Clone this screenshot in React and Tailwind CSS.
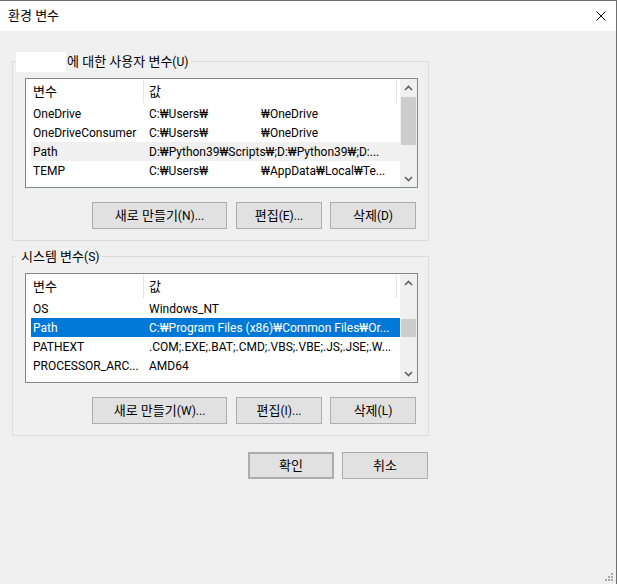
import React from "react";

const userRows = [
  { name: "OneDrive", pre: "C:₩Users₩", post: "₩OneDrive" },
  { name: "OneDriveConsumer", pre: "C:₩Users₩", post: "₩OneDrive" },
  { name: "Path", value: "D:₩Python39₩Scripts₩;D:₩Python39₩;D:..." },
  { name: "TEMP", pre: "C:₩Users₩", post: "₩AppData₩Local₩Te..." },
];

const systemRows = [
  { name: "OS", value: "Windows_NT" },
  { name: "Path", value: "C:₩Program Files (x86)₩Common Files₩Or..." },
  { name: "PATHEXT", value: ".COM;.EXE;.BAT;.CMD;.VBS;.VBE;.JS;.JSE;.W..." },
  { name: "PROCESSOR_ARC...", value: "AMD64" },
];

// hangul is a touch bigger than the latin text in the original
function K({ children }) {
  return <span className="text-[13px]">{children}</span>;
}

function Chevron({ up }) {
  return (
    <svg width="9" height="6" viewBox="0 0 9 6">
      <polyline
        points={up ? "1,5 4.5,1.5 8,5" : "1,1 4.5,4.5 8,1"}
        fill="none"
        stroke="#606060"
        strokeWidth="1.6"
      />
    </svg>
  );
}

function ListView({ rows, hoverRow, selectedRow, thumbClass }) {
  return (
    <div className="flex h-[110px] w-[393px] border border-[#828790] bg-white">
      <div className="flex-1 min-w-0 overflow-hidden">
        <div className="flex h-[25px]">
          <div className="w-[117px] pl-[7px] flex items-center"><K>변수</K></div>
          <div className="w-[254px] pl-[5px] flex items-center border-l border-r border-[#e5e5e5] my-[1px]"><K>값</K></div>
        </div>
        {rows.map((r, i) => {
          const sel = i === selectedRow;
          const hov = i === hoverRow;
          return (
            <div
              key={i}
              className={`flex h-[19px] ml-[5px] items-center whitespace-nowrap ${
                sel ? "bg-[#0078d7] text-white" : hov ? "bg-[#f0f0f0]" : ""
              }`}
            >
              <div className="w-[112px] pl-[2px] overflow-hidden">{r.name}</div>
              <div className="flex-1 pl-[6px] overflow-hidden">
                {r.value ? (
                  r.value
                ) : (
                  <>
                    <span className="inline-block w-[112px]">{r.pre}</span>
                    {r.post}
                  </>
                )}
              </div>
            </div>
          );
        })}
      </div>
      <div className="w-[17px] bg-[#f0f0f0] flex flex-col">
        <div className="h-[17px] flex items-center justify-center">
          <Chevron up />
        </div>
        <div className="flex-1">
          <div className={`mx-[1px] bg-[#cdcdcd] ${thumbClass}`} />
        </div>
        <div className="h-[17px] flex items-center justify-center">
          <Chevron />
        </div>
      </div>
    </div>
  );
}

function Btn({ children, className = "" }) {
  return (
    <button className={`h-[27px] bg-[#e1e1e1] border border-[#adadad] flex items-center justify-center ${className}`}>
      {children}
    </button>
  );
}

function Group({ legend, children }) {
  return (
    <div className="relative w-[417px] border border-[#dcdcdc] pt-[16px] pl-[12px] pb-[11px]">
      <div className="absolute top-[-10px] left-[3px] h-[20px] flex items-center bg-[#f0f0f0] pr-[3px]">
        {legend}
      </div>
      {children}
    </div>
  );
}

export default function App() {
  return (
    <div className="relative w-[618px] h-[584px] bg-white text-[12px] text-black font-['Roboto','Noto_Sans_CJK_KR',sans-serif]">
      <div className="w-[617px] h-full flex flex-col border-t border-r border-[#6e6e6e]">
        <div className="h-[30px] bg-white flex items-center justify-between pl-[8px] pr-[10px]">
          <K>환경 변수</K>
          <svg width="10" height="10" viewBox="0 0 10 10">
            <path d="M0.5 0.5 L9.5 9.5 M9.5 0.5 L0.5 9.5" stroke="#000" strokeWidth="1" />
          </svg>
        </div>
        <div className="flex-1 bg-[#f0f0f0] pl-[12px] pt-[30px]">
          <Group
            legend={
              <>
                <span className="w-[50px] h-[20px] bg-white" />
                <span className="pl-[1px]"><K>에 대한 사용자 변수</K>(U)</span>
              </>
            }
          >
            <ListView rows={userRows} hoverRow={2} thumbClass="mt-[1px] h-[48px]" />
            <div className="flex mt-[14px] pl-[67px] gap-[9px]">
              <Btn className="w-[135px]"><K>새로 만들기</K>(N)...</Btn>
              <Btn className="w-[86px]"><K>편집</K>(E)...</Btn>
              <Btn className="w-[86px] ml-[-1px]"><K>삭제</K>(D)</Btn>
            </div>
          </Group>
          <div className="h-[15px]" />
          <Group legend={<span className="pl-[5px]"><K>시스템 변수</K>(S)</span>}>
            <ListView rows={systemRows} selectedRow={1} thumbClass="mt-[28px] h-[18px]" />
            <div className="flex mt-[14px] pl-[67px] gap-[9px]">
              <Btn className="w-[135px]"><K>새로 만들기</K>(W)...</Btn>
              <Btn className="w-[86px]"><K>편집</K>(I)...</Btn>
              <Btn className="w-[86px] ml-[-1px]"><K>삭제</K>(L)</Btn>
            </div>
          </Group>
          <div className="flex w-[417px] justify-end gap-[8px] mt-[16px] pr-[1px]">
            <Btn className="w-[86px] border-2 border-[#0078d7]"><K>확인</K></Btn>
            <Btn className="w-[86px]"><K>취소</K></Btn>
          </div>
        </div>
      </div>
      <svg className="absolute left-[604px] top-[572px]" width="10" height="10" viewBox="0 0 10 10">
        <g fill="#a8a8a8">
          <rect x="7" y="1" width="2" height="2" />
          <rect x="4" y="4" width="2" height="2" />
          <rect x="7" y="4" width="2" height="2" />
          <rect x="1" y="7" width="2" height="2" />
          <rect x="4" y="7" width="2" height="2" />
          <rect x="7" y="7" width="2" height="2" />
        </g>
      </svg>
    </div>
  );
}
